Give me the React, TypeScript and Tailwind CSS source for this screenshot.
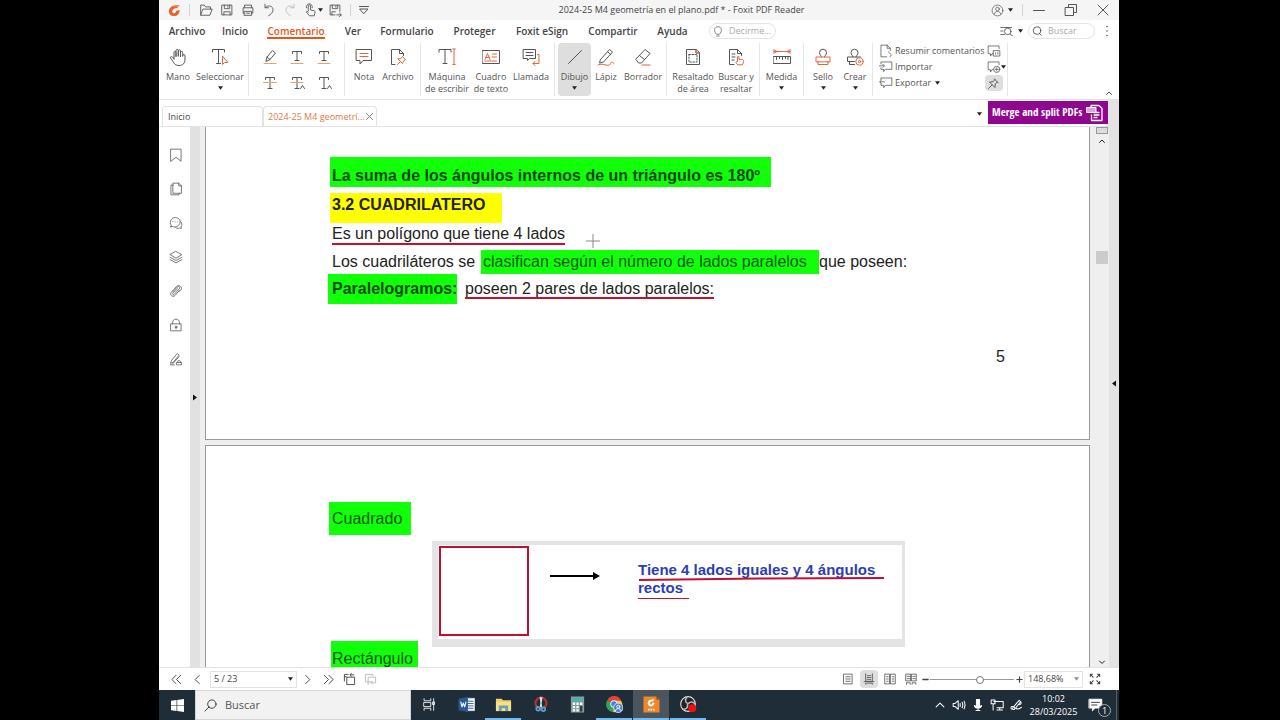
import type { ReactNode } from "react";

/**
 * App.tsx
 *
 * Foxit PDF Reader window (Comentario tab) on a Windows desktop:
 * title bar, menu, ribbon, document view, status bar and taskbar.
 */

const ORANGE = "#e2673b";
const AMBER = "#f0a060";

interface IconProps {
  children: ReactNode;
  box?: number;
  className?: string;
}

function Icon({ children, box = 18, className = "size-[18px]" }: IconProps) {
  return (
    <svg
      viewBox={`0 0 ${box} ${box}`}
      className={`shrink-0 ${className}`}
      fill="none"
      stroke="currentColor"
      strokeWidth={1}
      strokeLinecap="round"
      strokeLinejoin="round"
      aria-hidden="true"
    >
      {children}
    </svg>
  );
}

function Caret({ className = "" }: { className?: string }) {
  return (
    <svg viewBox="0 0 6 4" className={`w-[5px] h-[4px] shrink-0 ${className}`} aria-hidden="true">
      <path d="M0 0h6L3 4z" fill="#222" />
    </svg>
  );
}

function FoxitLogo() {
  return (
    <svg viewBox="0 0 14 14" className="size-[13px]" aria-hidden="true">
      <path d="M12.600 1C6 .6 1 2.600 1 8c0 3.400 2.500 5 5.500 5C10 13 12.300 11 12.500 6.500L8.600 7.600C8.400 9.300 7.600 10 6.500 10 5.300 10 4.600 9.200 4.600 8c0-2.600 2.800-3.600 5.600-4z" fill="#e8622a" />
      <path d="M12.600 1C9 1 5.500 1.600 3.200 3.600c2.600-1 5-1 7-.2z" fill="#f39a4a" />
    </svg>
  );
}

/* ---------- title bar ---------- */

const quickActions = [
  {
    label: "Abrir",
    icon: <path d="M3 14.500V3.500h4l1.500 2H14v2.500M3 14.500 5.500 8h10.500l-2.500 6.500z" />,
  },
  {
    label: "Guardar",
    icon: <path d="M3.500 3.500h11v11h-11zM6 3.500v4h6v-4M10 4.500v1.500M5.500 14.500V11h7v3.500" />,
  },
  {
    label: "Imprimir",
    icon: <path d="M5 6.500v-3h8v3M5 12.500H3.500v-6h11v6H13M5 10.500h8v4.500H5zM7 12.500h4" />,
  },
  {
    label: "Deshacer",
    icon: <path d="M4.500 2.500v4h4M4.700 6.300c3-3.600 9.300-2 8.800 3C13.200 12 11 14 8.500 15.500" />,
  },
];

function TitleBar() {
  return (
    <header className="flex h-5 shrink-0 items-center bg-[#f5f5f5] text-[#555]">
      <span className="flex w-[30px] justify-center">
        <FoxitLogo />
      </span>
      <span className="mr-[5px] h-3 w-px bg-[#d4d4d4]" />
      {quickActions.map((a) => (
        <button key={a.label} aria-label={a.label} className="flex w-[21px] justify-center">
          <Icon className="size-[16px]">{a.icon}</Icon>
        </button>
      ))}
      <button aria-label="Rehacer" className="flex w-[21px] justify-center text-[#bbb]">
        <Icon className="size-[16px]">
          <path d="M13.500 2.500v4h-4M13.300 6.300c-3-3.600-9.300-2-8.800 3 .3 2.700 2.500 4.700 5 6.200" />
        </Icon>
      </button>
      <button aria-label="Modo táctil" className="flex w-[24px] items-center justify-center">
        <Icon className="size-[16px]">
          <path d="M7 10V4.500a1.200 1.200 0 0 1 2.500 0V9l4 .8c1 .2 1.300 1 1.100 2l-.8 3.700H8.500L5 11.500c-.5-1 1-1.600 2 0M5 6.500A3.500 3.500 0 0 1 8.200 2 3.500 3.500 0 0 1 11.500 6.500" />
        </Icon>
        <Caret />
      </button>
      <button aria-label="Guardar como" className="flex w-[22px] justify-center">
        <Icon className="size-[16px]">
          <path d="M9 14.500H3.500v-11h11v7M6 3.500v4h6v-4M10 4.500v1.500M5.500 14.500V11h4M11 14.500h5M14 12.500l2 2-2 2" />
        </Icon>
      </button>
      <span className="ml-1 h-3 w-px bg-[#d4d4d4]" />
      <button aria-label="Personalizar" className="flex w-[26px] justify-center">
        <Icon box={12} className="size-[12px]">
          <path d="M1.500 2.500h9M2 5h8L6 9.500z" />
        </Icon>
      </button>
      <h1 className="flex-1 text-center text-[9px] leading-3 text-[#444]">
        2024-25 M4 geometría en el plano.pdf * - Foxit PDF Reader
      </h1>
      <button aria-label="Cuenta" className="flex w-[32px] items-center justify-center gap-1">
        <Icon className="size-[13px]">
          <circle cx="9" cy="9" r="7.500" />
          <circle cx="9" cy="7" r="2.500" />
          <path d="M4.500 14c.5-5 8.500-5 9 0" />
        </Icon>
        <Caret />
      </button>
      <span className="ml-1 h-3 w-px bg-[#d4d4d4]" />
      <button aria-label="Minimizar" className="flex w-8 justify-center">
        <Icon box={12} className="size-[12px]">
          <path d="M.5 6.500h11" />
        </Icon>
      </button>
      <button aria-label="Restaurar" className="flex w-8 justify-center">
        <Icon box={14} className="size-[14px]">
          <path d="M1.500 4.500h8v8h-8zM4.500 4.500v-3h8v8h-3" />
        </Icon>
      </button>
      <button aria-label="Cerrar" className="flex w-8 justify-center">
        <Icon box={12} className="size-[12px]">
          <path d="M1 1l10 10M11 1 1 11" />
        </Icon>
      </button>
    </header>
  );
}

/* ---------- menu ---------- */

const menuItems = [
  { label: "Archivo", width: "w-[52px]" },
  { label: "Inicio", width: "w-[44px]" },
  { label: "Comentario", width: "w-[78px]", active: true },
  { label: "Ver", width: "w-[36px]" },
  { label: "Formulario", width: "w-[72px]" },
  { label: "Proteger", width: "w-[63px]" },
  { label: "Foxit eSign", width: "w-[72px]" },
  { label: "Compartir", width: "w-[70px]" },
  { label: "Ayuda", width: "w-[49px]" },
];

function MenuBar() {
  return (
    <nav className="flex h-[22px] shrink-0 items-center pl-[2px] text-[10px] leading-3 font-semibold text-[#444]">
      {menuItems.map((m) => (
        <button key={m.label} className={`flex justify-center ${m.width}`}>
          {m.active ? (
            <span className="border-b-2 border-[#e2571f] pt-[2px] text-[#e2571f]">{m.label}</span>
          ) : (
            m.label
          )}
        </button>
      ))}
      <label className="ml-3 flex h-4 w-[67px] items-center rounded-full border border-[#e4e4e4] pl-[2px] font-normal">
        <Icon className="size-[12px]">
          <path d="M6.500 13.500C2 9.500 3.500 2.500 9 2.500s7 7 2.500 11zM7 16.500h4" />
        </Icon>
        <input
          aria-label="Decirme"
          placeholder="Decirme..."
          className="ml-[5px] w-[44px] text-[9px] outline-none placeholder:text-[#aaa]"
        />
      </label>
      <span className="flex-1" />
      <button aria-label="Buscar avanzado" className="flex items-center gap-1">
        <Icon className="size-[14px]">
          <path d="M1 4.500h14M1 9h3M1 13.500h5M13 13.500l3 1.500" />
          <circle cx="10" cy="9.500" r="4.200" />
        </Icon>
        <Caret />
      </button>
      <label className="ml-[5px] flex h-4 w-[67px] items-center rounded-full border border-[#e4e4e4] pl-[3px] font-normal">
        <Icon box={12} className="size-[10px]">
          <circle cx="6" cy="5.500" r="4.500" />
          <path d="M9 9l2 2" />
        </Icon>
        <input
          aria-label="Buscar"
          placeholder="Buscar"
          className="ml-[6px] w-[40px] text-[9px] outline-none placeholder:text-[#aaa]"
        />
      </label>
      <button aria-label="Más opciones" className="flex w-[24px] justify-center">
        <Icon box={12} className="size-[12px]">
          <path d="M6 1.500v.1M6 6v.1M6 10.500v.1" strokeWidth={1.500} />
        </Icon>
      </button>
    </nav>
  );
}

/* ---------- ribbon ---------- */

interface ToolProps {
  label: string;
  width: string;
  caret?: boolean;
  active?: boolean;
  children: ReactNode;
}

function Tool({ label, width, caret, active, children }: ToolProps) {
  return (
    <button
      className={`flex h-[53px] flex-col items-center rounded-sm pt-[5px] ${width} ${active ? "bg-[#dedede]" : ""}`}
    >
      <Icon>{children}</Icon>
      <span className="mt-[5px] text-center text-[9px] leading-3 whitespace-pre">{label}</span>
      {caret && <Caret className="mt-[3px]" />}
    </button>
  );
}

function Group({ children, className = "" }: { children: ReactNode; className?: string }) {
  return (
    <div className={`flex h-[53px] shrink-0 border-r border-[#e6e6e6] ${className}`}>{children}</div>
  );
}

function LetterT({ h = 11 }: { h?: number }) {
  return <path d={`M4.500 5.500v-2h9v2M9 3.500v${h}M7 ${3.5 + h}h4`} />;
}

const markupTools = [
  {
    label: "Resaltar",
    icon: (
      <>
        <path d="M5 13l1-4 5.500-6.500 3 2.500L9 11.500zM6 9l3 2.500" />
        <path d="M3 15.500h12" stroke={AMBER} />
      </>
    ),
  },
  {
    label: "Subrayar ondulado",
    icon: (
      <>
        <LetterT h={9} />
        <path d="M3 15.500h12" stroke={AMBER} />
      </>
    ),
  },
  {
    label: "Subrayar",
    icon: (
      <>
        <LetterT h={9} />
        <path d="M3 15.500h12" stroke={AMBER} />
      </>
    ),
  },
  {
    label: "Tachar",
    icon: (
      <>
        <LetterT />
        <path d="M2.500 8.500h13" stroke={AMBER} />
      </>
    ),
  },
  {
    label: "Reemplazar",
    icon: (
      <>
        <LetterT />
        <path d="M3 8.500h12" stroke={AMBER} />
        <path d="M12.500 14.500l2-3 2 3" />
      </>
    ),
  },
  {
    label: "Insertar",
    icon: (
      <>
        <LetterT />
        <path d="M12.500 14.500l2-3 2 3" />
      </>
    ),
  },
];

function Ribbon() {
  return (
    <section className="flex h-[58px] shrink-0 border-b border-[#e2e2e2] pt-px text-[#555]">
      <Group className="w-[90px]">
        <Tool label="Mano" width="w-[38px]">
          <path d="M5 11V4.500c0-1.500 2-1.500 2 0V8.500M7 8V2.500c0-1.500 2.300-1.500 2.300 0V8M9.300 8V3c0-1.500 2.200-1.500 2.200 0v5.500M11.500 8.500V4.500c0-1.500 2.200-1.500 2.200 0V8M13.700 8c0-2 2.300-2 2.300-.2V11c0 4-2 6.500-6 6.500-3.500 0-4.500-1.500-6-4L1.500 10c-.6-1.300 1.200-2 2-.9L5 11" />
        </Tool>
        <Tool label="Seleccionar" width="w-[46px]" caret>
          <path d="M1.500 4V1.500h12V4M7.500 1.500v14M5.500 15.500h4" />
          <path d="M11.500 8.500v8l2-2h3z" stroke={ORANGE} />
        </Tool>
      </Group>
      <Group className="w-[96px]">
        <div className="grid grid-cols-3 content-start gap-y-2 pt-[5px] pl-[7px]">
          {markupTools.map((t) => (
            <button key={t.label} aria-label={t.label} className="flex w-[27px] justify-center">
              <Icon>{t.icon}</Icon>
            </button>
          ))}
        </div>
      </Group>
      <Group className="w-[76px] pl-[2px]">
        <Tool label="Nota" width="w-[34px]">
          <path d="M1.500 1.500h15v11H8l-3 3.500v-3.500H1.500z" />
          <path d="M5 5.500h8M5 8.500h8" stroke={ORANGE} />
        </Tool>
        <Tool label="Archivo" width="w-[34px]">
          <path d="M6 16.500H2.500v-15h8l4 4v2M10.500 1.500v4h4" />
          <path d="M8.500 16.500l2.500-2.500M9 11l4.500 4.500 1-2.500 2-1.500-3-3-1.500 2z" stroke={ORANGE} />
        </Tool>
      </Group>
      <Group className="w-[134px] pl-[2px]">
        <Tool label={"Máquina\nde escribir"} width="w-[48px]">
          <path d="M1 4V1.500h12V4M7 1.500v14M5 15.500h4" />
          <path d="M16 1v15.500M14.800 1h2.400M14.800 16.500h2.400" stroke={ORANGE} />
        </Tool>
        <Tool label={"Cuadro\nde texto"} width="w-[40px]">
          <path d="M.5 2.500h17v13H.5z" />
          <path d="M3 11.500l2.500-6 2.500 6M4 9.500h3M10.500 6h4M10.500 9h4M3 13h11.500" stroke={ORANGE} />
        </Tool>
        <Tool label="Llamada" width="w-[40px]">
          <path d="M1.500 1.500h12v9h-6l-2 2v-2h-4zM4 4.500h7M4 7.500h7" />
          <path d="M15.500 6.500h1.500v9h-6M13 13.500l-2 2 2 2" stroke={ORANGE} />
        </Tool>
      </Group>
      <Group className="w-[112px] pl-[3px]">
        <Tool label="Dibujo" width="w-[33px]" caret active>
          <path d="M2.500 15.500l13-13" />
        </Tool>
        <Tool label="Lápiz" width="w-[30px]">
          <path d="M3.500 11.500l9-10 3 2.500-9 10-3.500 1zM10.500 3.500l3 3" />
          <path d="M1 17c3-1.500 6-.5 8 0s4 .5 4.500-1.500 2-1 3.500 0" stroke={ORANGE} />
        </Tool>
        <Tool label="Borrador" width="w-[44px]">
          <path d="M2 11l9-9.500 5 4L7.500 15H5zM5.500 7.500l5 4" />
          <path d="M8 17h8" stroke={ORANGE} />
        </Tool>
      </Group>
      <Group className="w-[93px] pl-[2px]">
        <Tool label={"Resaltado\nde área"} width="w-[48px]">
          <path d="M12 1.500H2.500v15h13V5zM12 1.500V5h3.500" />
          <path d="M5 6.500h8v7.500H5z" strokeDasharray="1.500 1.500" />
          <path d="M12 1.500V5h3.500" stroke={ORANGE} />
        </Tool>
        <Tool label={"Buscar y\nresaltar"} width="w-[38px]">
          <path d="M7 16.500H2.500v-15h8l4 4v2M10.500 1.500v4h4M5 6h3M5 9h3M5 12h2" />
          <path d="M10.500 16.500c-2-2-2-3 0-3V9c0-1 1.500-1 1.500 0v2.500c4-.5 5 .5 4.500 2.500l-1 2.500z" stroke={ORANGE} />
        </Tool>
      </Group>
      <Group className="w-[44px]">
        <Tool label="Medida" width="w-[44px]" caret>
          <path d="M1 3.500h16M1 1.500v4M17 1.500v4M3 2.500l-2 1 2 1M15 2.500l2 1-2 1" stroke={ORANGE} />
          <path d="M.5 8.500h17v7H.5zM3.500 8.500v3M6.500 8.500v2M9.500 8.500v3M12.500 8.500v2M15 8.500v3" />
        </Tool>
      </Group>
      <Group className="w-[69px] pl-[2px]">
        <Tool label="Sello" width="w-[34px]" caret>
          <path d="M7.500 9C7.500 7.500 5.500 7 5.500 4.700a3.500 3.500 0 0 1 7 0C12.500 7 10.500 7.500 10.500 9" />
          <path d="M2 13.500V9h14v4.500zM4 13.500V16.500h10v-3" stroke={ORANGE} />
        </Tool>
        <Tool label="Crear" width="w-[30px]" caret>
          <path d="M7 9C7 7.500 5 7 5 4.700a3.500 3.500 0 0 1 7 0C12 7 10 7.500 10 9M8.500 13.500h-7V9h13M3.500 13.500v3h5" />
          <circle cx="13.500" cy="13.500" r="3.700" stroke={ORANGE} />
          <circle cx="13.500" cy="13.500" r="1.200" stroke={ORANGE} />
        </Tool>
      </Group>
      <Group className="w-[135px] justify-between pr-[1px] pl-[6px]">
        <div className="flex flex-col text-[9px] leading-4">
          <button className="flex items-center gap-[2px] whitespace-nowrap">
            <Icon className="size-[14px]">
              <path d="M10 16.500H2.500v-15h8l4 4v3M10.500 1.500v4h4M12 10l4 4-2 2.500" />
            </Icon>
            Resumir comentarios
          </button>
          <button className="flex items-center gap-[2px]">
            <Icon className="size-[14px]">
              <path d="M2.500 5V2.500h14v9.500H8l-2 3v-3H2.500v-2M.5 7.500h6M5 5.500l2 2-2 2" />
            </Icon>
            Importar
          </button>
          <button className="flex items-center gap-[2px]">
            <Icon className="size-[14px]">
              <path d="M2.500 5V2.500h14v9.500H8l-2 3v-3H2.500v-2M1 7.500h6M3 5.500l-2 2 2 2" />
            </Icon>
            Exportar
            <Caret className="ml-[2px]" />
          </button>
        </div>
        <div className="flex w-[24px] flex-col">
          <button aria-label="Mostrar comentarios" className="flex h-4 items-center pl-[2px]">
            <Icon className="size-[14px]">
              <path d="M8 12.500H6.500l-2 3v-3h-3v-10h14V6M8.500 8.500h8v7h-8zM11 13V11.500M14 13v-2.500" />
            </Icon>
          </button>
          <button aria-label="Ventanas emergentes" className="flex h-4 items-center pl-[2px]">
            <Icon className="size-[14px]">
              <path d="M8 12.500H6.500l-2 3v-3h-3v-10h14V6" />
              <circle cx="12.500" cy="12" r="4" />
              <path d="M12.500 10v4M10.500 12h4" />
            </Icon>
            <Caret />
          </button>
          <button
            aria-label="Mantener herramienta"
            className="flex h-4 w-[18px] items-center justify-center rounded-sm bg-[#dedede] text-[#333]"
          >
            <Icon className="size-[13px]">
              <path d="M10 2.500l5.500 5.500M11 3.500 8.500 6.500l-5 .5 7.500 7.500.500-5L14.500 7M7 11l-5 5" />
            </Icon>
          </button>
        </div>
      </Group>
      <button aria-label="Contraer cinta" className="mr-[5px] mb-[1px] ml-auto self-end">
        <Icon box={10} className="size-[10px]">
          <path d="M2.500 6.500 5 4l2.500 2.500" />
        </Icon>
      </button>
    </section>
  );
}

/* ---------- document tabs ---------- */

function DocumentTabs() {
  return (
    <div className="flex h-[27px] shrink-0 items-start border-b border-[#e2e2e2]">
      <div className="flex flex-1 items-end self-stretch pl-[3px] text-[9px] leading-3">
        <button className="h-5 w-[101px] rounded-t-sm border border-b-0 border-[#e2e2e2] pl-[5px] text-left text-[#444]">
          Inicio
        </button>
        <div className="flex h-5 w-[114px] items-center justify-between rounded-t-sm border border-b-0 border-[#e2e2e2] pr-1 pl-1 whitespace-nowrap text-[#e07a4c]">
          <a href="#documento">2024-25 M4 geometrí...</a>
          <button aria-label="Cerrar pestaña" className="text-[#777]">
            <Icon box={10} className="size-[9px]">
              <path d="M1.500 1.500l7 7M8.500 1.500l-7 7" />
            </Icon>
          </button>
        </div>
      </div>
      <button aria-label="Lista de pestañas" className="mt-3 mr-[6px] flex">
        <Caret />
      </button>
      <a
        href="#merge"
        className="mt-px flex h-[23px] w-[120px] items-center justify-between bg-[#8f068f] px-1 font-['Liberation_Sans_Narrow','Open_Sans_Condensed','Roboto_Condensed',sans-serif] text-[11px] font-bold whitespace-nowrap text-white"
      >
        Merge and split PDFs
        <Icon className="size-[18px]">
          <path d="M5 3V1.500h8l3 3v12H5.500V11M8 8.500h5M8 11h5M8 13.500h3" strokeWidth={1.300} />
          <path d="M1 3.500h9v5H1z" fill="#d9a6d9" />
        </Icon>
      </a>
      <span className="w-[11px] self-stretch bg-[#e3e3e3]" />
    </div>
  );
}

/* ---------- document ---------- */

const panelButtons = [
  { label: "Marcadores", icon: <path d="M2.500 1.500h13v15.500L9 12l-6.500 5z" /> },
  {
    label: "Páginas",
    icon: <path d="M5.500 1.500h7l3.500 3.500v9.500H5.500zM12.500 1.500V5H16M5.500 4H2.500v12.500H13v-2" />,
  },
  {
    label: "Comentarios",
    icon: (
      <>
        <path d="M3 12.500C-.5 7.500 3 2 8 2s8 4.500 5.500 8.500-6.500 4-8.500 3l-3 .5zM5 7.500v.1M8 7.500v.1M11 7.500v.1" />
        <path d="M15 7c2 2 2 5 .5 7l.5 2-2.500-.5c-2 .8-4 .5-5-.5" />
      </>
    ),
  },
  {
    label: "Capas",
    icon: <path d="M9 2l7.500 4L9 10.500 1.500 6zM1.500 9.500 9 13.500l7.500-4M1.500 12.500 9 16.500l7.500-4" />,
  },
  {
    label: "Adjuntos",
    icon: (
      <path d="M4.500 10.500l6-6.500c2-2 4.500.5 2.500 2.500l-6.500 7c-1 1-2.500-.5-1.500-1.500l6-6M13.500 8l-5.500 6.500c-3 3.500-8-.5-5-4l6.500-7c3.500-3.500 9 .5 5.500 4.500l-1.500 1.500" />
    ),
  },
  {
    label: "Seguridad",
    icon: (
      <>
        <path d="M2.500 7.500h13v9h-13zM4.500 7.500V6c0-6 9-6 9 0v1.500M9 12v2" />
        <circle cx="9" cy="11.500" r="1.200" />
      </>
    ),
  },
  {
    label: "Firmas",
    icon: (
      <path d="M2 14.500l1.500-4 7-8.500 2.500 2-7 8.500zM4.500 15.500l8.500-9.500M11 13.500v-1c0-2 4-2 4 0v1M10 13.500h6v3h-6zM2 16.500h5" />
    ),
  },
];

function SidePanel() {
  return (
    <aside className="flex w-[31px] shrink-0 flex-col items-center gap-[20px] pt-[21px] text-[#555]">
      {panelButtons.map((b) => (
        <button key={b.label} aria-label={b.label} className="flex pl-[2px]">
          <Icon className="size-[14px]">{b.icon}</Icon>
        </button>
      ))}
    </aside>
  );
}

function Mark({ children, className = "" }: { children: ReactNode; className?: string }) {
  return <mark className={`flex items-center whitespace-nowrap ${className}`}>{children}</mark>;
}

function PageFive() {
  return (
    <article className="relative h-[313px] shrink-0 border border-t-0 border-[#999] bg-white pt-[30px] pl-[122px]">
      <h2 className="flex font-bold">
        <Mark className="ml-[2px] h-[30px] w-[441px] bg-[#12ff0a] pt-[7px] pl-[2px] text-[#0a4a0a]">
          La suma de los ángulos internos de un triángulo es 180º
        </Mark>
      </h2>
      <h2 className="mt-[6px] flex font-bold">
        <Mark className="ml-[2px] h-[30px] w-[172px] bg-[#ffff00] pb-[7px] pl-[2px] text-[#222]">
          3.2 CUADRILATERO
        </Mark>
      </h2>
      <p className="mt-px flex pl-1">
        <span className="h-[21px] border-b-2 border-[#c3102f] leading-[20px]">
          Es un polígono que tiene 4 lados
        </span>
      </p>
      <p className="mt-[5px] flex items-center pl-1 whitespace-nowrap">
        <span className="w-[149px]">Los cuadriláteros se</span>
        <Mark className="h-[24px] w-[338px] bg-[#12ff0a] pl-[2px] text-[#0a5a0a]">
          clasifican según el número de lados paralelos
        </Mark>
        que poseen:
      </p>
      <p className="flex whitespace-nowrap">
        <Mark className="h-[30px] w-[129px] bg-[#12ff0a] pl-1 font-bold text-[#0a4a0a]">
          Paralelogramos:
        </Mark>
        <span className="mt-[3px] ml-2 h-[22px] border-b-2 border-[#c3102f] leading-6">
          poseen 2 pares de lados paralelos:
        </span>
      </p>
      <p className="mt-[42px] pr-[84px] text-right leading-[22px]">5</p>
      {/* crosshair pointer of the drawing tool */}
      <svg viewBox="0 0 14 14" className="absolute top-[107px] left-[380px] size-[14px]" aria-hidden="true">
        <path d="M7 0v14M0 7h14" stroke="#888" />
      </svg>
    </article>
  );
}

function PageSix() {
  return (
    <article className="mt-[5px] flex h-[600px] shrink-0 flex-col items-start border border-[#999] bg-white pt-[56px] pl-[123px]">
      <h3>
        <Mark className="h-[33px] w-[82px] bg-[#12ff0a] pl-[3px] text-[#0a5a0a]">Cuadrado</Mark>
      </h3>
      <figure className="mt-[6px] ml-[103px] flex h-[106px] w-[473px] items-start border-t-4 border-r-[3px] border-b-8 border-l-[6px] border-[#e4e4e4]">
        <div className="mt-px ml-px h-[90px] w-[90px] shrink-0 border-2 border-[#c3102f]" />
        <svg viewBox="0 0 52 10" className="mt-[26px] ml-[20px] h-[10px] w-[52px] shrink-0" aria-hidden="true">
          <path d="M1 5h45" stroke="#000" strokeWidth={2.200} />
          <path d="M44 1l7 4-7 4z" fill="#000" />
        </svg>
        <figcaption className="mt-[15px] ml-[37px] text-[15px] font-bold whitespace-nowrap text-[#2b3eb5]">
          <span className="relative block leading-[19px]">
            Tiene 4 lados iguales y 4 ángulos
            <svg viewBox="0 0 246 4" className="absolute top-[17px] left-0 h-[4px] w-[246px]" aria-hidden="true">
              <path d="M1 3l120-1.500L246 1" stroke="#c3102f" strokeWidth={2} fill="none" />
            </svg>
          </span>
          <span className="block h-[20px] w-[51px] border-b border-[#c3102f] leading-[18px]">
            rectos
          </span>
        </figcaption>
      </figure>
      <h3 className="-mt-[6px] ml-[2px]">
        <Mark className="h-[35px] w-[87px] bg-[#12ff0a] pl-[1px] text-[#0a5a0a]">Rectángulo</Mark>
      </h3>
    </article>
  );
}

function DocumentView() {
  return (
    <main className="flex min-h-0 flex-1 overflow-hidden">
      <SidePanel />
      <div className="flex w-[10px] shrink-0 items-center justify-center bg-[#e1e1e1]">
        <button aria-label="Expandir panel">
          <svg viewBox="0 0 4 6" className="h-[7px] w-[4px]" aria-hidden="true">
            <path d="M0 0v6l4-3z" fill="#111" />
          </svg>
        </button>
      </div>
      <div
        id="documento"
        className="flex flex-1 flex-col overflow-hidden bg-[#efefef] px-[5px] font-['Liberation_Sans',Arial,sans-serif] text-[16px] text-[#222]"
      >
        <PageFive />
        <PageSix />
      </div>
      <div className="flex w-[14px] shrink-0 flex-col items-center bg-[#efefef] text-[#222]">
        <span className="h-[7px] w-3 border border-[#999] bg-[#ddd]" />
        <Icon box={10} className="mt-[2px] size-[10px]">
          <path d="M2.500 6.500 5 4l2.500 2.500" />
        </Icon>
        <span className="mt-[105px] h-[13px] w-3 bg-[#cbcbcb]" />
        <Icon box={10} className="mt-auto size-[10px]">
          <path d="M2.500 4 5 6.500 7.500 4" />
        </Icon>
      </div>
      <div className="flex w-[10px] shrink-0 items-center justify-center bg-[#e3e3e3]">
        <button aria-label="Expandir panel derecho" className="-mt-[28px]">
          <svg viewBox="0 0 4 6" className="h-[7px] w-[4px]" aria-hidden="true">
            <path d="M4 0v6L0 3z" fill="#111" />
          </svg>
        </button>
      </div>
    </main>
  );
}

/* ---------- status bar ---------- */

function NavButton({ label, d }: { label: string; d: string }) {
  return (
    <button aria-label={label} className="flex w-[21px] justify-center">
      <Icon box={14} className="size-[13px]">
        <path d={d} />
      </Icon>
    </button>
  );
}

const viewModes = [
  { label: "Una página", d: "M2.500 1.500h11v13h-11zM5 5h6M5 8h6M5 11h6" },
  { label: "Continuo", d: "M3.500 1v10h9V1M1.500 11.500h13M3.500 15v-1.500h9V15M5.500 3.500h5M5.500 6h5M5.500 8.500h5", active: true },
  { label: "Dos páginas", d: "M1.500 1.500h6v13h-6zM9 1.500h6v13H9zM3.500 5h2M3.500 8h2M3.500 11h2M11 5h2M11 8h2M11 11h2" },
  { label: "Dos páginas continuo", d: "M1.500 1.500h6v9h-6zM9 1.500h6v9H9zM3 4.500h3M3 7.500h3M10.500 4.500h3M10.500 7.500h3M2 15v-2h5v2M9.500 15v-2h5v2" },
];

function StatusBar() {
  return (
    <footer className="flex h-[23px] shrink-0 items-center border-t border-[#e2e2e2] pl-[7px] text-[9px] text-[#444]">
      <NavButton label="Primera página" d="M6.500 2.500 2 7l4.500 4.500M11.500 2.500 7 7l4.500 4.500" />
      <NavButton label="Página anterior" d="M9 2.500 4.500 7 9 11.500" />
      <div className="relative ml-[2px] flex h-[17px] w-[87px] items-center border border-[#e2e2e2]">
        <select aria-label="Página" className="w-full appearance-none pl-[3px] outline-none">
          <option>5 / 23</option>
        </select>
        <Caret className="absolute right-[3px]" />
      </div>
      <NavButton label="Página siguiente" d="M5 2.500 9.500 7 5 11.500" />
      <NavButton label="Última página" d="M2.500 2.500 7 7l-4.500 4.500M7.500 2.500 12 7l-4.500 4.500" />
      <NavButton label="Vista anterior" d="M1.500 8.500v-7h4M1.500 4h2M4.500 4.500h8v8h-8zM8 2h3.500M9 .500 7.500 2 9 3.500" />
      <span className="flex text-[#bbb]">
        <NavButton label="Vista siguiente" d="M8 9.500H1.500v-8h8V3M4.500 12.500v-8h8v6h-5M9 9l-1.500 1.500L9 12" />
      </span>
      <span className="flex-1" />
      <div className="flex gap-[3px]">
        {viewModes.map((m) => (
          <button
            key={m.label}
            aria-label={m.label}
            className={`flex size-[18px] items-center justify-center rounded-sm ${m.active ? "bg-[#dedede]" : ""}`}
          >
            <Icon box={16} className="size-[12px]">
              <path d={m.d} />
            </Icon>
          </button>
        ))}
      </div>
      <button aria-label="Alejar" className="flex w-[10px] justify-center">
        <Icon box={8} className="size-[7px]">
          <path d="M1 4h6" strokeWidth={1.500} />
        </Icon>
      </button>
      <input
        type="range"
        aria-label="Zoom"
        defaultValue={60}
        className="h-2 w-[84px] appearance-none bg-transparent [&::-webkit-slider-runnable-track]:h-px [&::-webkit-slider-runnable-track]:bg-[#999] [&::-webkit-slider-thumb]:-mt-[3px] [&::-webkit-slider-thumb]:size-[8px] [&::-webkit-slider-thumb]:appearance-none [&::-webkit-slider-thumb]:rounded-full [&::-webkit-slider-thumb]:border [&::-webkit-slider-thumb]:border-[#777] [&::-webkit-slider-thumb]:bg-white"
      />
      <button aria-label="Acercar" className="flex w-[10px] justify-center">
        <Icon box={8} className="size-[7px]">
          <path d="M1 4h6M4 1v6" strokeWidth={1.300} />
        </Icon>
      </button>
      <div className="relative flex h-[17px] w-[59px] items-center border border-[#e2e2e2]">
        <select aria-label="Nivel de zoom" className="w-full appearance-none pl-[3px] outline-none">
          <option>148,68%</option>
        </select>
        <Caret className="absolute right-[3px] opacity-50" />
      </div>
      <button aria-label="Pantalla completa" className="mr-[18px] ml-[6px]">
        <Icon box={14} className="size-[12px]">
          <path d="M1.500 4V1.500H4M2 2l3 3M10 1.500h2.500V4M12 2 9 5M1.500 10v2.500H4M2 12l3-3M10 12.500h2.500V10M12 12 9 9" strokeWidth={1.200} />
        </Icon>
      </button>
    </footer>
  );
}

/* ---------- taskbar ---------- */

const taskApps = [
  {
    label: "Vista de tareas",
    icon: (
      <path d="M2.500 2v2.500h8V2M2.500 16v-2.500h8V16M2.500 6.500h8v5h-8zM14 2v14M13 6h2v3h-2z" stroke="#fff" />
    ),
  },
  {
    label: "Word",
    icon: (
      <>
        <path d="M9 2.500h8.500v13H9z" fill="#fff" stroke="#c5d3ea" />
        <path d="M11 5.500h5M11 8h5M11 10.500h5M11 13h5" stroke="#2b5797" />
        <path d="M.5 3l10-2v16l-10-2z" fill="#2b5797" stroke="none" />
        <path d="M3 6.500 4.200 11.500 5.600 7.500 7 11.500 8.400 6.500" stroke="#fff" strokeWidth={1.200} />
      </>
    ),
  },
  {
    label: "Explorador",
    open: true,
    icon: (
      <>
        <path d="M1 3h6l1.500 1.500H17V16H1z" fill="#f0d264" stroke="none" />
        <path d="M1 6.500h16V16H1z" fill="#f7e08a" stroke="none" />
        <path d="M4 16v-6h10v6h-3v-3H7v3z" fill="#6f9fb5" stroke="none" />
      </>
    ),
  },
  {
    label: "Recortes",
    icon: (
      <>
        <circle cx="9.500" cy="7.500" r="5.800" stroke="#a8352e" strokeWidth={2.500} />
        <path d="M8.800 1.500 10 11M10.500 1.500 9 11" stroke="#dfe6ea" strokeWidth={1.300} />
        <circle cx="6.500" cy="13.500" r="2" stroke="#55a5d8" strokeWidth={1.800} />
        <circle cx="12" cy="14" r="2" stroke="#55a5d8" strokeWidth={1.800} />
      </>
    ),
  },
  {
    label: "Calculadora",
    icon: (
      <>
        <path d="M2 .5h14v17H2z" fill="#8a9a9d" stroke="none" />
        <path d="M3.500 2h11v3.500h-11z" fill="#3fb8ad" stroke="none" />
        <path
          d="M4 7h2.500v2.500H4zM7.800 7h2.500v2.500H7.800zM11.600 7h2.500v2.500h-2.500zM4 10.500h2.500V13H4zM7.800 10.500h2.500V13H7.800zM4 14h2.500v2.500H4zM7.800 14h2.500v2.500H7.800z"
          fill="#fff"
          stroke="none"
        />
        <path d="M11.600 10.500h2.500v6h-2.500z" fill="#28404d" stroke="none" />
      </>
    ),
  },
  {
    label: "Chrome",
    open: true,
    icon: (
      <>
        <path d="M8.500 8.500 1.500 4.500a8 8 0 0 1 14.500.5z" fill="#e0443a" stroke="none" />
        <path d="M8.500 8.500 1.500 4.500a8 8 0 0 0 6 12.500z" fill="#34a353" stroke="none" />
        <path d="M8.500 8.500 7.500 17A8 8 0 0 0 16 5H9z" fill="#f6c92f" stroke="none" />
        <circle cx="8.500" cy="8.500" r="3.600" fill="#3f7fe8" stroke="#fff" />
        <circle cx="13" cy="12.500" r="5" fill="#4c7bc9" stroke="#d7e3f7" />
        <circle cx="13" cy="11.300" r="1.600" stroke="#fff" />
        <path d="M10 15.500c.5-3 5.500-3 6 0" stroke="#fff" />
      </>
    ),
  },
  {
    label: "Foxit",
    open: true,
    active: true,
    icon: (
      <>
        <path d="M.5.500H14L17.500 4v13.500H.5z" fill="#f0862b" stroke="none" />
        <path d="M14 .5V4h3.500z" fill="#a65312" stroke="none" />
        <path d="M12 3.500c-4 0-7 1-7 4.200 0 2.200 1.700 3.300 3.500 3.300 2.300 0 3.500-1.500 3.600-3.800H9.800C9.700 8.500 9.200 9 8.500 9 7.800 9 7.300 8.500 7.300 7.700c0-1.500 1.700-2 3.300-2.200z" fill="#fff" stroke="none" />
        <path d="M5.500 14.500h7" stroke="#fff" strokeWidth={1.800} strokeDasharray="1.600 1" strokeLinecap="butt" />
      </>
    ),
  },
  {
    label: "OBS",
    open: true,
    icon: (
      <>
        <circle cx="8.500" cy="8.500" r="7.800" fill="#222" stroke="#ddd" strokeWidth={1.200} />
        <path d="M8.500 8c-3-1-3.500-4-1.500-6M9 8c2-2.500 5.500-2 6.500.5M8 9c.5 3-1.500 5.500-4.500 5" stroke="#bbb" strokeWidth={1.600} />
        <circle cx="13" cy="13" r="4.200" fill="#f0100c" stroke="none" />
      </>
    ),
  },
];

const trayIcons = [
  { label: "Mostrar iconos ocultos", d: "M4 11.500l5-5 5 5" },
  { label: "Volumen", d: "M1.500 7v4H4l4 3.500v-11L4 7zM10.500 7v4M13 5.500c1 2 1 5 0 7M15.500 4c1.500 3 1.500 7 0 10" },
  { label: "Micrófono", d: "M7 2h4v8H7zM4.500 9.500c0 4.500 9 4.500 9 0M9 13v3M6.500 16h5", fill: true },
  { label: "Red", d: "M5 4.500h12v8H9M12.500 12.500v3M9 15.500h7M1.500 2.500h5v5h-5zM4 7.500v8" },
  { label: "Lápiz", d: "M3 14.500C1 9 7 11 7.500 13s-4 3-2.500-.5L13 3l2 2-7 8.500M9.500 13.500c3 2 5-1 6.500-1.500M13 8.500c3 0 3-2 2-3.500" },
];

function Taskbar() {
  return (
    <div className="flex h-[30px] shrink-0 items-stretch bg-[#1f2d38] text-white">
      <button aria-label="Inicio de Windows" className="flex w-9 items-center justify-center">
        <svg viewBox="0 0 14 14" className="size-[13px]" aria-hidden="true">
          <path d="M0 2l6-.9v5.500H0zM6.700 1 14 0v6.600H6.700zM0 7.300h6v5.600L0 12zM6.700 7.300H14V14l-7.300-1z" fill="#fff" />
        </svg>
      </button>
      <label className="flex w-[216px] items-center border border-[#d5d5d5] bg-[#f2f2f2] pl-2 text-[#333]">
        <Icon box={14} className="size-[13px]">
          <circle cx="8.500" cy="5.500" r="4.500" />
          <path d="M5.500 8.500 1 13" />
        </Icon>
        <input
          aria-label="Buscar en Windows"
          placeholder="Buscar"
          className="ml-2 w-full bg-transparent text-[11px] outline-none placeholder:text-[#555]"
        />
      </label>
      <div className="flex gap-px">
        {taskApps.map((a) => (
          <button
            key={a.label}
            aria-label={a.label}
            className={`flex w-9 items-center justify-center border-b-2 ${a.open ? "border-[#76b9ed]" : "border-transparent"} ${a.active ? "bg-[#4a555e]" : ""}`}
          >
            <Icon className={a.label === "Vista de tareas" ? "size-[15px]" : "size-[17px]"}>
              {a.icon}
            </Icon>
          </button>
        ))}
      </div>
      <span className="flex-1" />
      <div className="flex items-center">
        {trayIcons.map((t) => (
          <button key={t.label} aria-label={t.label} className="flex w-[19px] justify-center">
            <Icon className="size-[14px]">
              <path d={t.d} fill={t.fill ? "#fff" : "none"} strokeWidth={1.300} />
            </Icon>
          </button>
        ))}
      </div>
      <time className="flex w-[57px] flex-col justify-center text-center text-[9px] leading-[13px]">
        <span>10:02</span>
        <span>28/03/2025</span>
      </time>
      <button aria-label="Notificaciones" className="relative flex w-[34px] items-center justify-center pr-[6px]">
        <Icon className="size-[16px]">
          <path d="M1.500 2.500h14v10H8l-3 3v-3H1.500z" fill="#fff" />
          <path d="M4 6h9M4 9h6" stroke="#1f2d38" />
        </Icon>
        <span className="absolute right-[5px] bottom-[3px] flex size-[13px] items-center justify-center rounded-full border border-[#aaa] bg-[#1f2d38] text-[9px] leading-none">
          1
        </span>
      </button>
      <span className="mr-[2px] w-px bg-[#56616a]" />
    </div>
  );
}

export default function App() {
  return (
    <div className="flex h-screen flex-col bg-black pr-[161px] pl-[159px] font-['Open_Sans','Noto_Sans',sans-serif]">
      <div className="flex min-h-0 flex-1 flex-col bg-white">
        <TitleBar />
        <MenuBar />
        <Ribbon />
        <DocumentTabs />
        <DocumentView />
        <StatusBar />
        <Taskbar />
      </div>
    </div>
  );
}
